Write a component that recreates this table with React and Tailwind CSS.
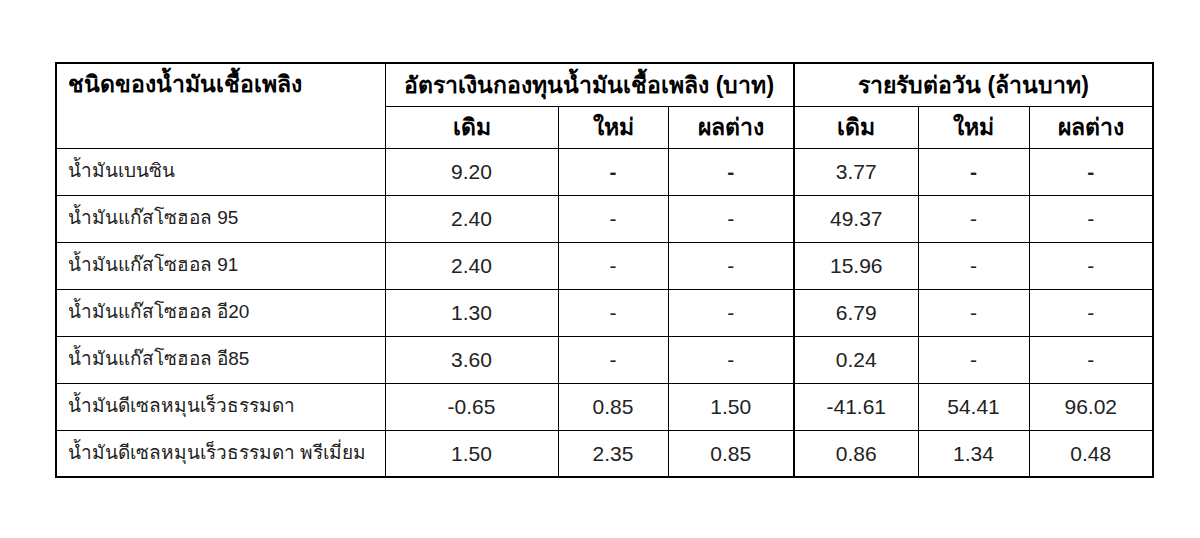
import React from "react";

const rows = [
  ["น้ำมันเบนซิน", "9.20", "-", "-", "3.77", "-", "-"],
  ["น้ำมันแก๊สโซฮอล 95", "2.40", "-", "-", "49.37", "-", "-"],
  ["น้ำมันแก๊สโซฮอล 91", "2.40", "-", "-", "15.96", "-", "-"],
  ["น้ำมันแก๊สโซฮอล อี20", "1.30", "-", "-", "6.79", "-", "-"],
  ["น้ำมันแก๊สโซฮอล อี85", "3.60", "-", "-", "0.24", "-", "-"],
  ["น้ำมันดีเซลหมุนเร็วธรรมดา", "-0.65", "0.85", "1.50", "-41.61", "54.41", "96.02"],
  ["น้ำมันดีเซลหมุนเร็วธรรมดา พรีเมี่ยม", "1.50", "2.35", "0.85", "0.86", "1.34", "0.48"],
];

const App = () => {
  return (
    <div className="w-[1200px] h-[538px] bg-white pt-[62px] pl-[55px] font-['Liberation_Sans',sans-serif]">
      <table className="table-fixed border-collapse border-2 border-black text-[#222]">
        <colgroup>
          <col className="w-[329px]" />
          <col className="w-[173px]" />
          <col className="w-[110px]" />
          <col className="w-[126px]" />
          <col className="w-[124px]" />
          <col className="w-[111px]" />
          <col className="w-[124px]" />
        </colgroup>
        <thead className="text-black font-bold text-[23px]">
          <tr className="h-[43px]">
            <th rowSpan={2} className="border border-black align-top text-left pl-[11px] pt-[3px] font-bold">
              ชนิดของน้ำมันเชื้อเพลิง
            </th>
            <th colSpan={3} className="border border-black border-r-2 text-center">
              อัตราเงินกองทุนน้ำมันเชื้อเพลิง (บาท)
            </th>
            <th colSpan={3} className="border border-black text-center">
              รายรับต่อวัน (ล้านบาท)
            </th>
          </tr>
          <tr className="h-[42px]">
            <th className="border border-black">เดิม</th>
            <th className="border border-black">ใหม่</th>
            <th className="border border-black border-r-2">ผลต่าง</th>
            <th className="border border-black">เดิม</th>
            <th className="border border-black">ใหม่</th>
            <th className="border border-black">ผลต่าง</th>
          </tr>
        </thead>
        <tbody className="text-[21px]">
          {rows.map((r, i) => (
            <tr key={i} className={i === 0 ? "h-[47px] [&_.dash]:font-bold" : "h-[47px]"}>
              <td className="border border-black pl-[11px] whitespace-nowrap text-[19px]">{r[0]}</td>
              {r.slice(1).map((v, j) => (
                <td
                  key={j}
                  className={
                    (j === 2 ? "border border-black border-r-2 text-center" : "border border-black text-center") +
                    (v === "-" ? " dash" : "")
                  }
                >
                  {v}
                </td>
              ))}
            </tr>
          ))}
        </tbody>
      </table>
    </div>
  );
};

export default App;
